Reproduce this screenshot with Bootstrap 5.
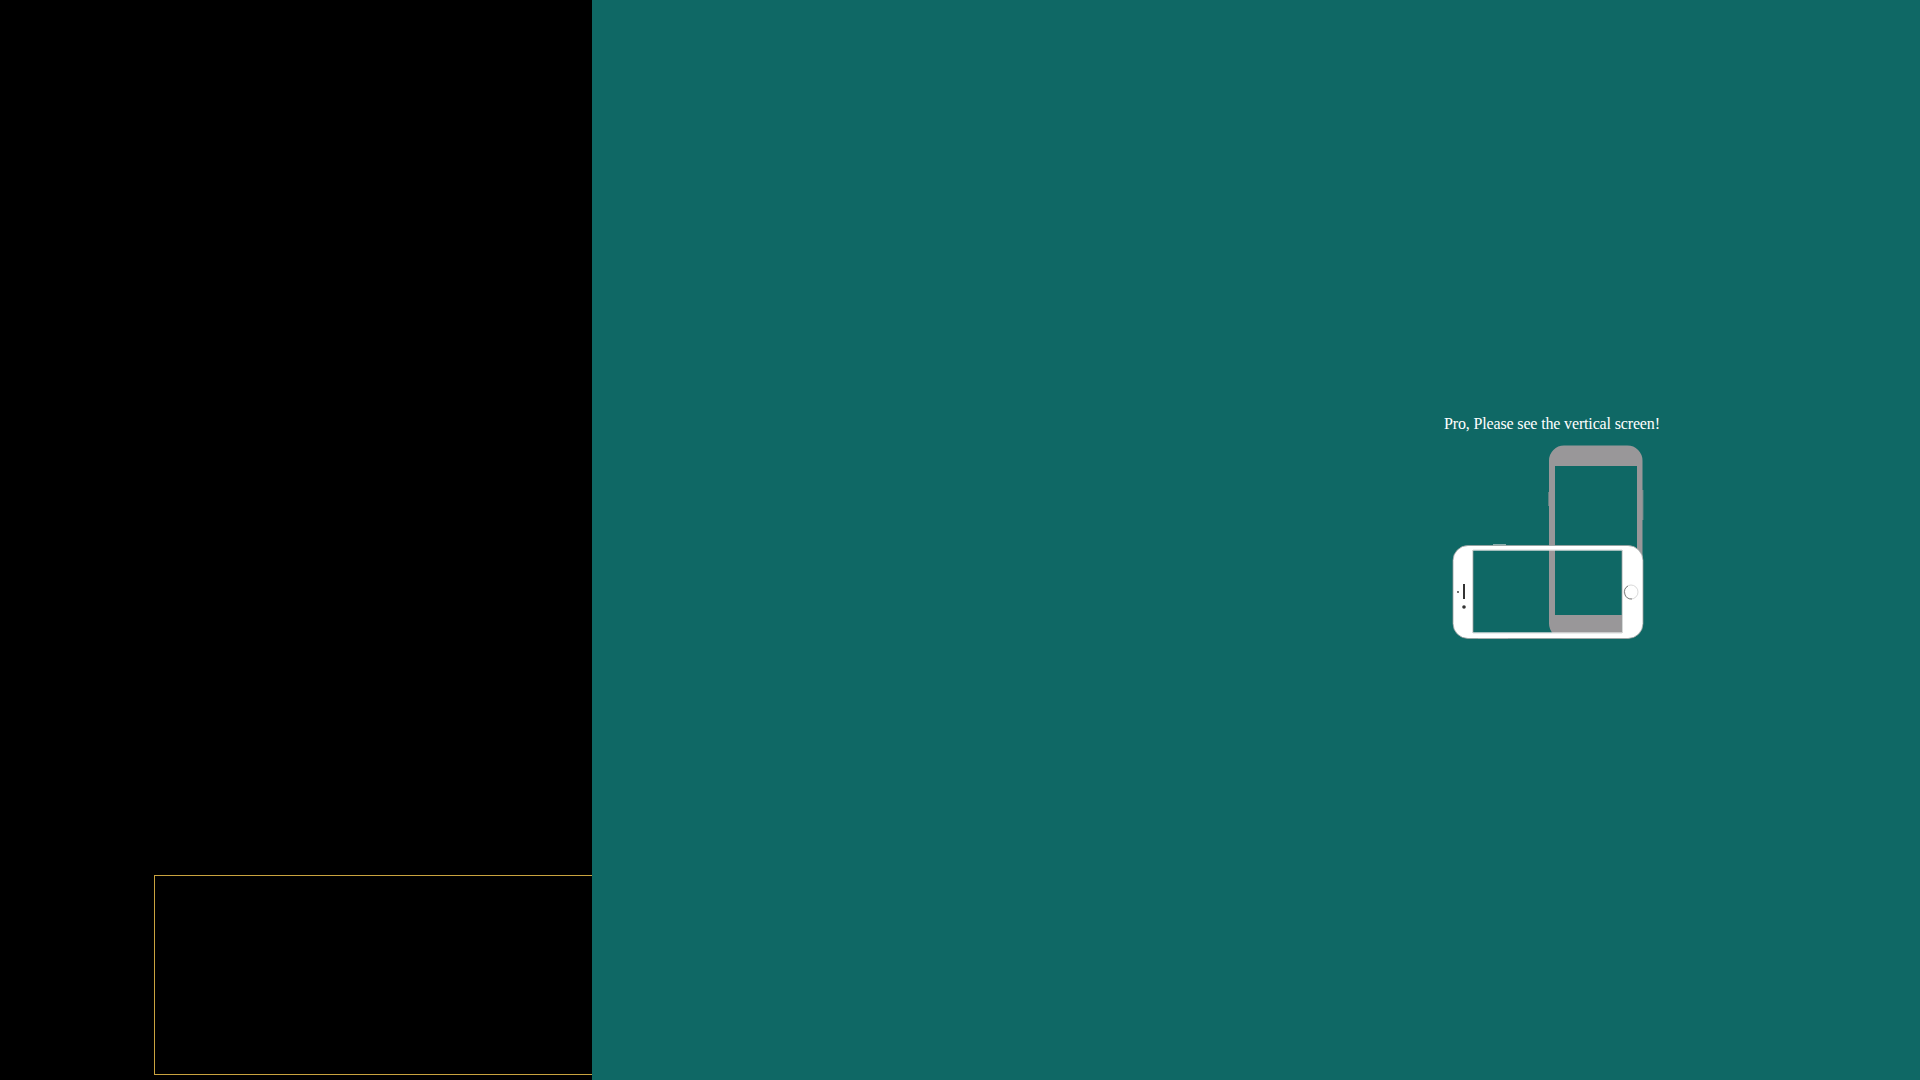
<!DOCTYPE html>
<html lang="en">
<head>
<meta charset="utf-8">
<title>Pro, Please see the vertical screen!</title>
<link href="https://cdn.jsdelivr.net/npm/bootstrap@5.3.0/dist/css/bootstrap.min.css" rel="stylesheet">
<style>
html,body{height:100%;margin:0;background:#000;overflow:hidden}
.side-pane{width:592px;background:#000;padding-bottom:5px}
.gold-frame{width:438px;height:200px;border:1px solid #c9a33f;border-right:0}
.main-pane{background:#0f6865;padding-top:412px;padding-right:261px}
.notice{width:215px}
.notice-text{font:16px/24px "Liberation Serif",serif;letter-spacing:-.15px;color:#fff;white-space:nowrap}
.phones{display:block;margin-top:4px}
</style>
</head>
<body>
<div class="d-flex vh-100">
  <div class="side-pane d-flex flex-column justify-content-end align-items-end flex-shrink-0">
    <div class="gold-frame"></div>
  </div>
  <div class="main-pane flex-grow-1 d-flex justify-content-end align-items-start">
    <div class="notice">
      <div class="notice-text">Pro, Please see the vertical screen!</div>
      <svg class="phones" width="215" height="200" viewBox="1444 440 215 200" xmlns="http://www.w3.org/2000/svg">
        <path fill="#999799" fill-rule="evenodd" d="M1564 445.5h63.500a15 15 0 0 1 15 15v163a15 15 0 0 1-15 15H1564a15 15 0 0 1-15-15V460.500a15 15 0 0 1 15-15zM1555 466v149h82V466z"/>
        <rect x="1548.4" y="492" width="1" height="14" fill="#999799"/>
        <rect x="1642.300" y="490" width="1" height="30" fill="#999799"/>
        <rect x="1493" y="544.4" width="13" height="1" fill="#dcdcdc"/>
        <rect x="1478" y="638" width="30" height=".8" fill="#c4c8c8"/>
        <path fill="#fff" stroke="#9aa0a0" stroke-width=".8" fill-rule="evenodd" d="M1468 545.500h160a15 15 0 0 1 15 15v63a15 15 0 0 1-15 15H1468a15 15 0 0 1-15-15v-63a15 15 0 0 1 15-15zM1473 550v83h149v-83z"/>
        <path fill="none" stroke="#fff" stroke-width="1" d="M1473 550h149M1473 633h149"/>
        <circle cx="1631" cy="592" r="7" fill="#fff" stroke="#c9c9c9" stroke-width=".7"/>
        <path fill="none" stroke="#666" stroke-width=".8" d="M1628 586a7 7 0 0 0 4 13"/>
        <rect x="1463" y="584" width="2" height="15" fill="#333"/>
        <circle cx="1458" cy="592" r=".9" fill="#333"/>
        <circle cx="1464" cy="607" r="1.8" fill="#333"/>
      </svg>
    </div>
  </div>
</div>
<script src="https://cdn.jsdelivr.net/npm/bootstrap@5.3.0/dist/js/bootstrap.bundle.min.js"></script>
</body>
</html>
